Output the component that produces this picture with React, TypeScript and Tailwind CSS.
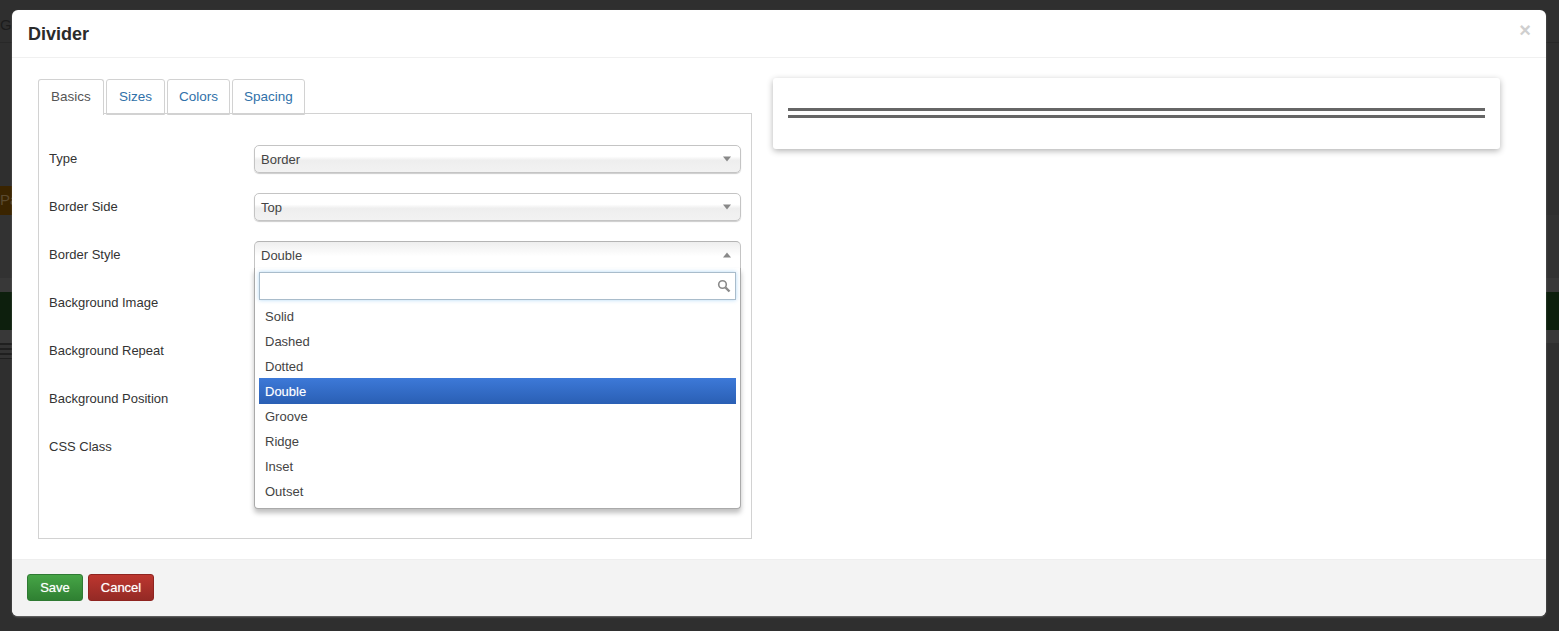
import React from 'react';

const FONT = "[font-family:'Liberation_Sans',Arial,sans-serif]";

const tabs = [
  { name: 'Basics', width: 'w-[66px]' },
  { name: 'Sizes', width: 'w-[59px]' },
  { name: 'Colors', width: 'w-[63px]' },
  { name: 'Spacing', width: 'w-[73px]' },
];
const options = ['Solid', 'Dashed', 'Dotted', 'Double', 'Groove', 'Ridge', 'Inset', 'Outset'];

const Caret = ({ up }: { up?: boolean }) => (
  <svg width="8" height="6" viewBox="0 0 8 6" className="shrink-0">
    <path d={up ? 'M4 0.5 L8 5.5 L0 5.5 Z' : 'M0 0.5 L8 0.5 L4 5.5 Z'} fill="#888" />
  </svg>
);

const Select = ({ value }: { value: string }) => (
  <div className="flex h-7 w-[487px] items-center justify-between rounded-[5px] border border-[#c4c4c4] bg-[linear-gradient(to_bottom,#ffffff_0%,#ffffff_40%,#eeeeee_55%,#f2f2f2_100%)] pl-[6px] pr-[9px] text-[#444] shadow-[0_1px_1px_rgba(0,0,0,0.2)]">
    <span className="pt-[1px]">{value}</span>
    <Caret />
  </div>
);

const Row = ({ label, children }: { label: string; children?: React.ReactNode }) => (
  <div className="flex h-7 items-center">
    <label className="w-[205px] shrink-0 pb-[1px]">{label}</label>
    {children}
  </div>
);

const OpenSelect = () => (
  <div className="absolute left-[205px] top-0 z-10 w-[487px]">
    <div className="flex h-7 items-center justify-between rounded-t-[5px] border border-b-[#d8d8d8] border-l-[#c4c4c4] border-r-[#c4c4c4] border-t-[#b4b4b4] bg-[linear-gradient(to_bottom,#eeeeee_0%,#ffffff_55%,#ffffff_100%)] pl-[6px] pr-[9px] text-[#444]">
      <span className="pt-[1px]">Double</span>
      <Caret up />
    </div>
    <div className="-mt-[1px] h-[241px] rounded-b-[4px] border border-t-0 border-[#aaa] bg-white px-1 pt-[4px] shadow-[0_4px_5px_rgba(0,0,0,0.25)]">
      <div className="flex h-7 items-center justify-end border border-[#a9bccb] pr-[4px] shadow-[0_0_4px_rgba(82,168,236,0.45)]">
        <svg width="14" height="14" viewBox="0 0 14 14" fill="none" stroke="#8a8a8a">
          <circle cx="5.5" cy="5.5" r="3.8" strokeWidth="1.6" />
          <path d="M8.5 8.5 L12.5 12.5" strokeWidth="2.4" />
        </svg>
      </div>
      <ul className="mt-[4px]">
        {options.map(o => (
          <li
            key={o}
            className={
              o === 'Double'
                ? '-mt-[1px] flex h-[26px] items-center bg-[linear-gradient(to_bottom,#3d79d8,#2a5fb4)] px-[6px] pt-[1px] text-white [text-shadow:0_0_1px_rgba(255,255,255,0.4)]'
                : 'flex h-[25px] items-center px-[6px] text-[#444]'
            }
          >
            {o}
          </li>
        ))}
      </ul>
    </div>
  </div>
);

export default function App() {
  return (
    <div className={`${FONT} relative h-[631px] w-full overflow-hidden bg-[#2f2f2f] text-[13px] text-[#333]`}>
      {/* dimmed page behind the modal */}
      <div className="flex h-full flex-col">
        <div className="h-[43px] shrink-0 border-b border-[#282828] pt-[14px] text-[15px] text-[#1c1c1c]">Gr</div>
        <div className="h-[143px] shrink-0" />
        <div className="h-[29px] w-[12px] shrink-0 whitespace-nowrap bg-[#3a2400] text-[15px] leading-[28px] text-[#5a4a30]">Pa</div>
        <div className="h-[63px] shrink-0 bg-[#323232]" />
        <div className="h-[14px] shrink-0 bg-[#383838]" />
        <div className="h-[38px] shrink-0 bg-[#0d1f0d]" />
        <div className="h-[13px] shrink-0 bg-[#383838]" />
        <div className="h-[16px] w-[12px] shrink-0 bg-[repeating-linear-gradient(to_bottom,#1f1f1f_0px,#1f1f1f_2px,#333333_2px,#333333_5px)]" />
        <div className="flex-1" />
      </div>

      {/* modal */}
      <div className="absolute left-[12px] top-[10px] flex h-[606px] w-[1534px] flex-col overflow-hidden rounded-[6px] bg-white shadow-[0_1px_2px_rgba(255,255,255,0.3)]">
        <div className="flex h-[48px] shrink-0 items-center justify-between border-b border-[#f0f0f0] pl-[16px] pr-[15px]">
          <h3 className="pt-[2px] text-[18px] font-bold text-[#2b2b2b]">Divider</h3>
          <span className="-mt-[8px] text-[20px] font-bold leading-none text-[#cfcfcf]">×</span>
        </div>

        <div className="flex min-h-0 flex-1 pl-[26px] pt-[21px]">
          <div className="w-[714px] shrink-0">
            <div className="flex h-[34px] gap-[2px]">
              {tabs.map(t => (
                <div
                  key={t.name}
                  className={
                    t.name === 'Basics'
                      ? `relative z-10 flex h-[36px] ${t.width} items-center justify-center rounded-t-[3px] border border-b-0 border-[#d2d2d2] bg-white text-[13.5px] text-[#555]`
                      : `flex h-[36px] ${t.width} items-center justify-center rounded-t-[3px] border border-[#d2d2d2] bg-white text-[13.5px] text-[#3071a9]`
                  }
                >
                  {t.name}
                </div>
              ))}
            </div>
            <div className="relative flex h-[426px] flex-col gap-5 border border-[#d2d2d2] pl-[10px] pt-[31px]">
              <Row label="Type">
                <Select value="Border" />
              </Row>
              <Row label="Border Side">
                <Select value="Top" />
              </Row>
              <div className="relative">
                <Row label="Border Style" />
                <OpenSelect />
              </div>
              <Row label="Background Image" />
              <Row label="Background Repeat" />
              <Row label="Background Position" />
              <Row label="CSS Class" />
            </div>
          </div>

          <div className="-mt-[1px] ml-[21px] h-[71px] w-[727px] rounded-[3px] bg-white px-[15px] pt-[30px] shadow-[0_2px_6px_rgba(0,0,0,0.3)]">
            <div className="h-[10px] border-y-[3px] border-[#666]" />
          </div>
        </div>

        <div className="flex h-[57px] shrink-0 items-start gap-[5px] border-t border-[#eeeeee] bg-[#f3f3f3] pl-[15px] pt-[14px]">
          <button className="h-[27px] w-[56px] rounded-[3px] border border-[#2f7a33] bg-[linear-gradient(to_bottom,#46a546,#2f8032)] text-white [text-shadow:0_0_1px_rgba(255,255,255,0.6)]">
            Save
          </button>
          <button className="h-[27px] w-[66px] rounded-[3px] border border-[#8f2420] bg-[linear-gradient(to_bottom,#bd362f,#942a25)] text-white [text-shadow:0_0_1px_rgba(255,255,255,0.6)]">
            Cancel
          </button>
        </div>
      </div>
    </div>
  );
}
